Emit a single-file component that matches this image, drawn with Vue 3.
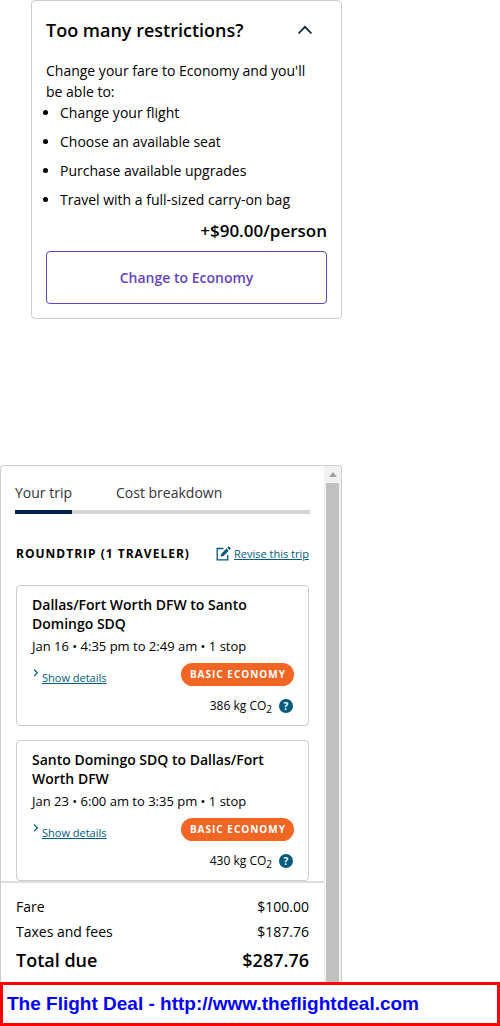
<script setup>
import { ref } from 'vue'

const open = ref(true)
const tab = ref('trip')

const perks = [
  'Change your flight',
  'Choose an available seat',
  'Purchase available upgrades',
  'Travel with a full-sized carry-on bag',
]

const flights = [
  { route: 'Dallas/Fort Worth DFW to Santo Domingo SDQ', when: 'Jan 16 • 4:35 pm to 2:49 am • 1 stop', co2: '386 kg CO' },
  { route: 'Santo Domingo SDQ to Dallas/Fort Worth DFW', when: 'Jan 23 • 6:00 am to 3:35 pm • 1 stop', co2: '430 kg CO' },
]
</script>

<template>
  <div class="page">
    <main class="content">
      <section class="upsell">
        <header class="upsell-head">
          <h2>Too many restrictions?</h2>
          <button class="toggle" type="button" aria-label="Toggle section" :aria-expanded="open" @click="open = !open">
            <svg width="16" height="10" viewBox="0 0 16 10" fill="none" stroke="#0c2340" stroke-width="1.7">
              <path d="M1.500 8.500 8 1.800l6.500 6.700" />
            </svg>
          </button>
        </header>
        <div v-show="open">
          <p class="intro">Change your fare to Economy and you'll be able to:</p>
          <ul class="perks">
            <li v-for="perk in perks" :key="perk">{{ perk }}</li>
          </ul>
          <p class="price">+$90.00/person</p>
          <button class="change" type="button">Change to Economy</button>
        </div>
      </section>

      <section class="trip">
        <div class="trip-main">
          <div class="trip-body">
            <nav class="tabs">
              <button type="button" :class="{ active: tab === 'trip' }" @click="tab = 'trip'">Your trip</button>
              <button type="button" :class="{ active: tab === 'cost' }" @click="tab = 'cost'">Cost breakdown</button>
            </nav>
            <div class="trip-head">
              <h3>ROUNDTRIP (1 TRAVELER)</h3>
              <a class="revise" href="#">
                <svg width="15" height="15" viewBox="0 0 15 15" fill="none">
                  <path d="M7.500 2.500H1.200v11.300h10.600V9" stroke="#005a7c" stroke-width="1.300" />
                  <path d="m4.500 10.800.8-3L10.500 2.600l2.200 2.200L7.500 10z" fill="#005a7c" />
                  <path d="m11.300 1.800 1-1q.5-.5 1 0l1.200 1.200q.5.5 0 1l-1 1z" fill="#005a7c" />
                </svg>
                <span>Revise this trip</span>
              </a>
            </div>
            <article v-for="flight in flights" :key="flight.route" class="flight">
              <h4>{{ flight.route }}</h4>
              <p class="when">{{ flight.when }}</p>
              <div class="row">
                <a class="details" href="#">
                  <svg width="7" height="12" viewBox="0 0 7 12" fill="none" stroke="#005a7c" stroke-width="1.200">
                    <path d="m2 2.500 3.400 3.300L2 9.100" />
                  </svg>
                  <span>Show details</span>
                </a>
                <span class="badge">BASIC ECONOMY</span>
              </div>
              <div class="co2">
                <span>{{ flight.co2 }}<sub>2</sub></span>
                <button class="help" type="button" aria-label="About carbon emissions">?</button>
              </div>
            </article>
          </div>
          <dl class="totals">
            <div><dt>Fare</dt><dd>$100.00</dd></div>
            <div><dt>Taxes and fees</dt><dd>$187.76</dd></div>
            <div class="due"><dt>Total due</dt><dd>$287.76</dd></div>
          </dl>
        </div>
        <div class="scroll" aria-hidden="true">
          <svg width="8" height="5" viewBox="0 0 8 5"><path d="M0 5 4 0l4 5z" fill="#a3a3a3" /></svg>
          <div class="thumb"></div>
        </div>
      </section>
    </main>
    <footer class="banner">The Flight Deal - http://www.theflightdeal.com</footer>
  </div>
</template>

<style>
body {
  background: #fff;
}
</style>

<style scoped>
.page {
  min-height: 100vh;
  display: flex;
  flex-direction: column;
  color: #000;
  font: 14px/21px "Open Sans", "Noto Sans", sans-serif;
}
.page * {
  box-sizing: border-box;
}
h2, h3, h4, p, ul, dl, dd {
  margin: 0;
  padding: 0;
}
button {
  font: inherit;
  color: inherit;
  background: none;
  border: 0;
  padding: 0;
  cursor: pointer;
}
a {
  color: #005a7c;
}
svg {
  display: block;
  flex: none;
}
.content {
  flex: 1;
  display: flex;
  flex-direction: column;
  gap: 146px;
  padding-right: 158px;
}
.upsell {
  margin-left: 31px;
  padding: 14px;
  border: 1px solid #ccc;
  border-radius: 4px;
}
.upsell-head {
  display: flex;
  align-items: center;
  justify-content: space-between;
  height: 30px;
  margin-bottom: 15px;
}
.upsell-head h2 {
  font-size: 18px;
  font-weight: 600;
  line-height: 24px;
}
.toggle {
  padding: 8px 14px;
}
.intro {
  padding-right: 12px;
}
.perks {
  padding-left: 14px;
}
.perks li {
  margin-bottom: 8px;
}
.price {
  font-size: 17px;
  font-weight: 600;
  line-height: 26px;
  text-align: right;
  margin-bottom: 7px;
}
.change {
  display: block;
  width: 100%;
  padding: 15px;
  border: 1px solid #6244bb;
  border-radius: 4px;
  color: #6244bb;
  font-weight: 600;
}
.trip {
  flex: 1;
  display: flex;
  border: 1px solid #ccc;
  border-bottom: 0;
  border-radius: 4px 4px 0 0;
  overflow: hidden;
}
.trip-main {
  flex: 1;
  min-width: 0;
}
.trip-body {
  padding: 13px 14px 0;
}
.tabs {
  display: flex;
  gap: 44px;
  color: #333;
  box-shadow: inset 0 -4px #d5d5d0;
}
.tabs button {
  padding: 3px 0 11px;
}
.tabs .active {
  box-shadow: inset 0 -4px #002244;
}
.trip-head {
  display: flex;
  align-items: center;
  justify-content: space-between;
  padding: 29px 1px 21px;
}
.trip-head h3 {
  font-size: 12px;
  font-weight: 700;
  letter-spacing: 1px;
}
.revise {
  display: flex;
  align-items: center;
  gap: 3px;
  font-size: 11px;
}
.flight {
  margin: 0 1px;
  padding: 9px 14px 7px 15px;
  border: 1px solid #ccc;
  border-radius: 4px;
}
.flight + .flight {
  margin-top: 14px;
}
.flight h4 {
  font-size: 14px;
  font-weight: 600;
  line-height: 19px;
}
.when {
  font-size: 13px;
  line-height: 27px;
}
.row {
  display: flex;
  align-items: center;
  justify-content: space-between;
  height: 28px;
}
.details {
  display: flex;
  gap: 3px;
  padding-top: 6px;
  font-size: 11px;
}
.badge {
  padding: 0 8px 0 9px;
  border-radius: 12px;
  background: #f26522;
  color: #fff;
  font-size: 10px;
  font-weight: 700;
  line-height: 23px;
  letter-spacing: 1px;
}
.co2 {
  display: flex;
  align-items: center;
  justify-content: flex-end;
  gap: 7px;
  margin-top: 6px;
  padding-right: 1px;
  font-size: 12px;
  line-height: 24px;
}
.co2 sub {
  font-size: 10px;
  line-height: 0;
}
.help {
  width: 14px;
  height: 14px;
  border-radius: 50%;
  background: #005a7c;
  color: #fff;
  font-size: 10px;
  font-weight: 700;
  line-height: 14px;
}
.totals {
  padding: 11px 15px 4px;
  border-top: 2px solid #ddd;
}
.totals div {
  display: flex;
  justify-content: space-between;
  line-height: 25px;
}
.totals .due {
  font-size: 18px;
  font-weight: 600;
  line-height: 33px;
}
.scroll {
  width: 17px;
  display: flex;
  flex-direction: column;
  align-items: center;
  gap: 6px;
  padding-top: 6px;
  background: #f1f1f1;
}
.thumb {
  flex: 1;
  width: 13px;
  background: #c1c1c1;
}
.banner {
  padding: 7px 4px;
  border: 3px solid #f00;
  color: #00f;
  background: #fff;
  font: bold 19px/24px "Liberation Sans", Arial, sans-serif;
}
</style>
